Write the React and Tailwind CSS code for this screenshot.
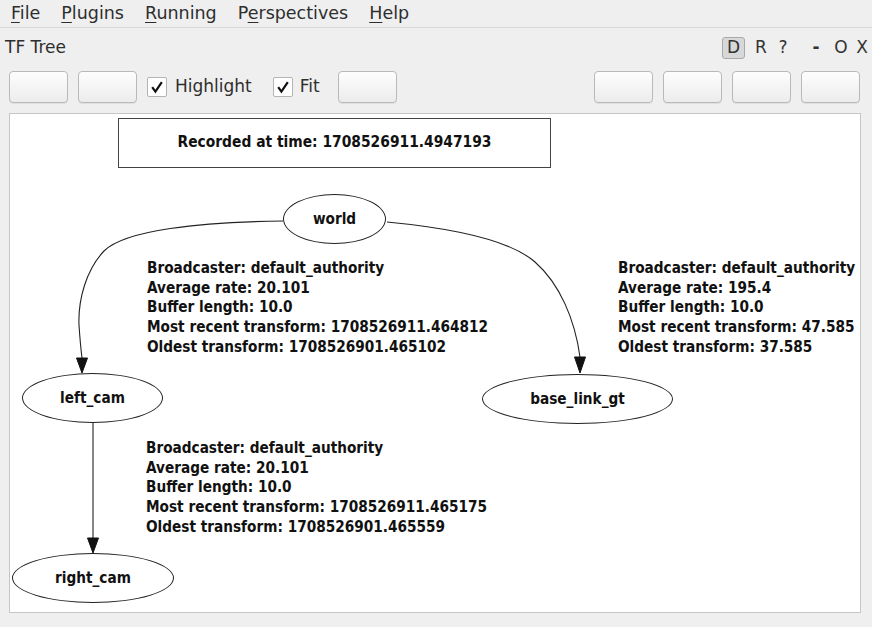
import React from 'react';

const menus = [
  { pre: '', key: 'F', post: 'ile' },
  { pre: '', key: 'P', post: 'lugins' },
  { pre: '', key: 'R', post: 'unning' },
  { pre: 'P', key: 'e', post: 'rspectives' },
  { pre: '', key: 'H', post: 'elp' },
];

const worldToLeft = [
  'Broadcaster: default_authority',
  'Average rate: 20.101',
  'Buffer length: 10.0',
  'Most recent transform: 1708526911.464812',
  'Oldest transform: 1708526901.465102',
];

const worldToBase = [
  'Broadcaster: default_authority',
  'Average rate: 195.4',
  'Buffer length: 10.0',
  'Most recent transform: 47.585',
  'Oldest transform: 37.585',
];

const leftToRight = [
  'Broadcaster: default_authority',
  'Average rate: 20.101',
  'Buffer length: 10.0',
  'Most recent transform: 1708526911.465175',
  'Oldest transform: 1708526901.465559',
];

const ToolButton = () => (
  <div className="h-[32px] w-[59px] rounded-[4px] border border-[#b9b9b9] bg-gradient-to-b from-[#fdfdfd] to-[#ececec] shadow-[0_1px_0_rgba(0,0,0,0.06)]" />
);

const Check = () => (
  <div className="flex h-[20px] w-[20px] items-center justify-center rounded-[2px] border border-[#b4b4b4] bg-white">
    <svg width="14" height="14" viewBox="0 0 14 14">
      <path d="M2.2 7.2 L5.4 11.6 L11.8 2.2" fill="none" stroke="#111" strokeWidth="2.2" />
    </svg>
  </div>
);

// graphviz text: condensed bold face
const EdgeLabel = ({ lines, className }) => (
  <div
    className={`absolute whitespace-nowrap font-['DejaVu_Sans_Condensed','DejaVu_Sans',sans-serif] text-[15.2px] font-bold leading-[19.7px] text-[#111] ${className}`}
  >
    {lines.map((l) => (
      <div key={l}>{l}</div>
    ))}
  </div>
);

const Node = ({ label, className }) => (
  <div
    className={`absolute flex h-[50px] items-center justify-center rounded-[50%] border border-[#222] bg-white font-['DejaVu_Sans_Condensed','DejaVu_Sans',sans-serif] text-[15.2px] font-bold text-[#111] ${className}`}
  >
    {label}
  </div>
);

export default function App() {
  return (
    <div className="flex h-[627px] w-[872px] flex-col bg-[#efefef] font-['DejaVu_Sans',sans-serif] text-[#2e2e2e]">
      {/* menu bar */}
      <div className="flex h-[28px] items-center gap-[21px] border-b border-[#d9d9d9] pl-[11px] text-[17.5px]">
        {menus.map((m) => (
          <span key={m.key + m.post}>
            {m.pre}
            <span className="underline underline-offset-[3px]">{m.key}</span>
            {m.post}
          </span>
        ))}
      </div>

      {/* plugin title */}
      <div className="flex h-[40px] items-center justify-between pl-[5px] text-[17px]">
        <span>TF Tree</span>
        <div className="flex items-center text-[#333]">
          <span className="flex h-[22px] w-[23px] items-center justify-center rounded-[3px] border border-[#a9a9a9] bg-[#d8d8d8]">D</span>
          <span className="ml-[5px] w-[22px] text-center">R</span>
          <span className="w-[22px] text-center">?</span>
          <span className="ml-[11px] w-[22px] text-center font-bold">-</span>
          <span className="ml-[3px] w-[22px] text-center">O</span>
          <span className="w-[20px] text-center">X</span>
        </div>
      </div>

      {/* toolbar */}
      <div className="flex items-center pl-[9px] pr-[12px] pt-[3px] text-[17px]">
        <div className="flex items-center">
          <ToolButton />
          <div className="ml-[10px]">
            <ToolButton />
          </div>
          <div className="ml-[10px]">
            <Check />
          </div>
          <span className="ml-[8px]">Highlight</span>
          <div className="ml-[21px]">
            <Check />
          </div>
          <span className="ml-[7px]">Fit</span>
          <div className="ml-[18px]">
            <ToolButton />
          </div>
        </div>
        <div className="ml-auto flex items-center gap-[10px]">
          <ToolButton />
          <ToolButton />
          <ToolButton />
          <ToolButton />
        </div>
      </div>

      {/* graph canvas */}
      <div className="relative ml-[9px] mt-[10px] h-[500px] w-[852px] border border-[#c6c6c6] bg-white">
        <svg className="absolute inset-0" width="850" height="498" viewBox="10 114 850 498">
          <g fill="none" stroke="#222" strokeWidth="1.1">
            <path d="M283,221 C200,222 125,230 104,251 C86,270 78,300 79,325 C80,340 81,350 82,358" />
            <path d="M387,222 C450,228 510,240 535,262 C560,284 575,320 580,357" />
            <path d="M93,423 L93,538" />
          </g>
          <g fill="#111" stroke="#111" strokeWidth="1">
            <path d="M76.5,358 L87.5,358 L82,373 Z" />
            <path d="M574.5,357 L585.5,357 L580,373 Z" />
            <path d="M87.5,538 L98.5,538 L93,553 Z" />
          </g>
        </svg>

        <div className="absolute left-[108px] top-[4px] flex h-[50px] w-[433px] items-center justify-center border-[1.5px] border-[#444] font-['DejaVu_Sans_Condensed','DejaVu_Sans',sans-serif] text-[15.4px] font-bold text-[#111]">
          Recorded at time: 1708526911.4947193
        </div>

        <Node label="world" className="left-[273px] top-[80px] w-[103px]" />
        <Node label="left_cam" className="left-[12px] top-[259px] w-[141px]" />
        <Node label="base_link_gt" className="left-[472px] top-[260px] w-[191px]" />
        <Node label="right_cam" className="left-[2px] top-[439px] w-[162px]" />

        <EdgeLabel lines={worldToLeft} className="left-[137px] top-[145px]" />
        <EdgeLabel lines={worldToBase} className="left-[608px] top-[145px]" />
        <EdgeLabel lines={leftToRight} className="left-[136px] top-[325px]" />
      </div>
    </div>
  );
}
